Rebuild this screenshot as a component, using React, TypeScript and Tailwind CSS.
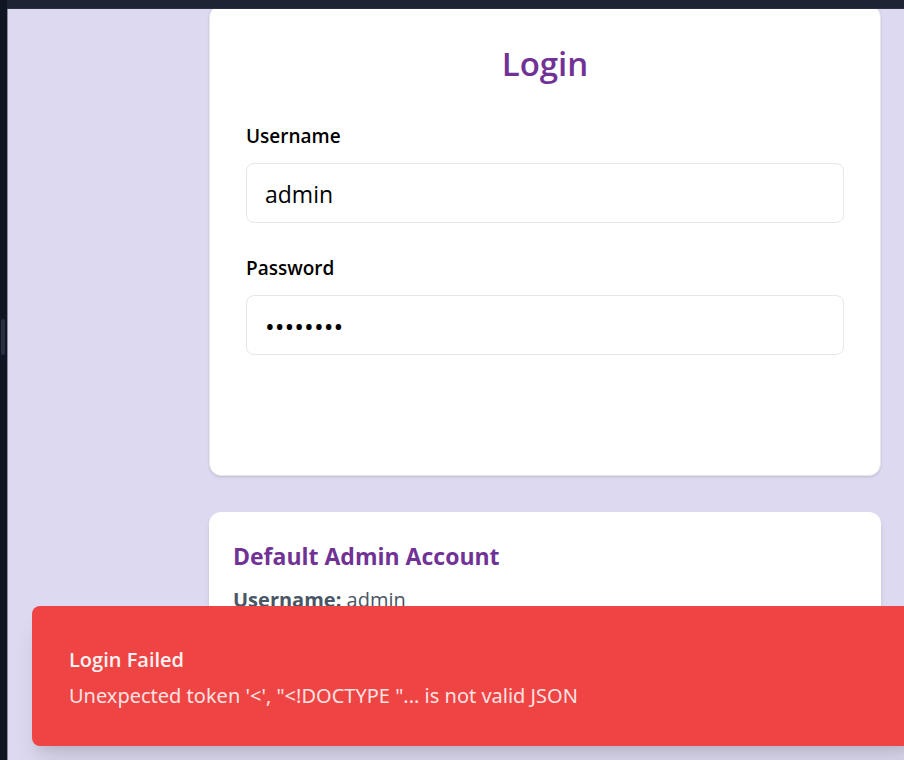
import { useState } from 'react';

type FieldProps = {
  id: string;
  label: string;
  type: 'text' | 'password';
  value: string;
  onChange: (value: string) => void;
};

function Field({ id, label, type, value, onChange }: FieldProps) {
  const textSize = type === 'password' ? 'text-[26px]' : 'text-[23px]';

  return (
    <div className="flex flex-col gap-[10px]">
      <label htmlFor={id} className="text-[19px] leading-[34px] font-semibold text-black">
        {label}
      </label>
      <input
        id={id}
        type={type}
        value={value}
        onChange={(event) => onChange(event.target.value)}
        className={`h-15 w-full rounded-lg border border-gray-200 bg-white px-[18px] pt-[2px] text-black outline-none ${textSize}`}
      />
    </div>
  );
}

function LoginCard() {
  const [username, setUsername] = useState('admin');
  const [password, setPassword] = useState('password');

  return (
    <form className="-mt-1 flex flex-col rounded-xl border border-gray-200 bg-white px-9 pt-[34px] pb-30 shadow-sm">
      <h1 className="text-center text-[33px] leading-12 font-semibold text-[#713296]">Login</h1>
      <div className="mt-[31px] flex flex-col gap-7">
        <Field id="username" label="Username" type="text" value={username} onChange={setUsername} />
        <Field id="password" label="Password" type="password" value={password} onChange={setPassword} />
      </div>
    </form>
  );
}

function AccountCard() {
  return (
    <section className="mt-9 rounded-xl bg-white p-6 text-[20px] leading-8 text-gray-600 shadow-md">
      <h2 className="mb-2 text-[23px] leading-10 font-bold text-[#713296]">Default Admin Account</h2>
      <p>
        <strong>Username:</strong> admin
      </p>
    </section>
  );
}

function Toast() {
  return (
    <div
      role="alert"
      className="absolute -right-4 bottom-[14px] left-6 rounded-lg bg-[#ef4444] px-[37px] pt-[38px] pb-[34px] text-[20px] leading-8 text-white shadow-xl"
    >
      <p className="font-semibold text-red-50">Login Failed</p>
      <p className="mt-1 font-['Noto_Sans',sans-serif] text-red-100">Unexpected token '&lt;', "&lt;!DOCTYPE "... is not valid JSON</p>
    </div>
  );
}

export default function App() {
  return (
    <div className="flex h-screen flex-col overflow-hidden bg-[#dcd9f0] font-['Open_Sans','Noto_Sans',sans-serif]">
      <header className="flex h-[9px] shrink-0 bg-[#0e1523]">
        <div className="ml-[7px] flex-1 border-b border-[#273145] bg-[#1d2433]" />
      </header>
      <div className="flex min-h-0 flex-1">
        <aside className="flex w-2 shrink-0 items-center border-r border-[#8b8b9e] bg-[#0e1523] pb-24 pl-px">
          <div className="h-9 w-1 rounded-full bg-[#292e40]" />
        </aside>
        <main className="relative min-w-0 flex-1 overflow-hidden pr-[23px] pl-[201px]">
          <LoginCard />
          <AccountCard />
          <Toast />
        </main>
      </div>
    </div>
  );
}
